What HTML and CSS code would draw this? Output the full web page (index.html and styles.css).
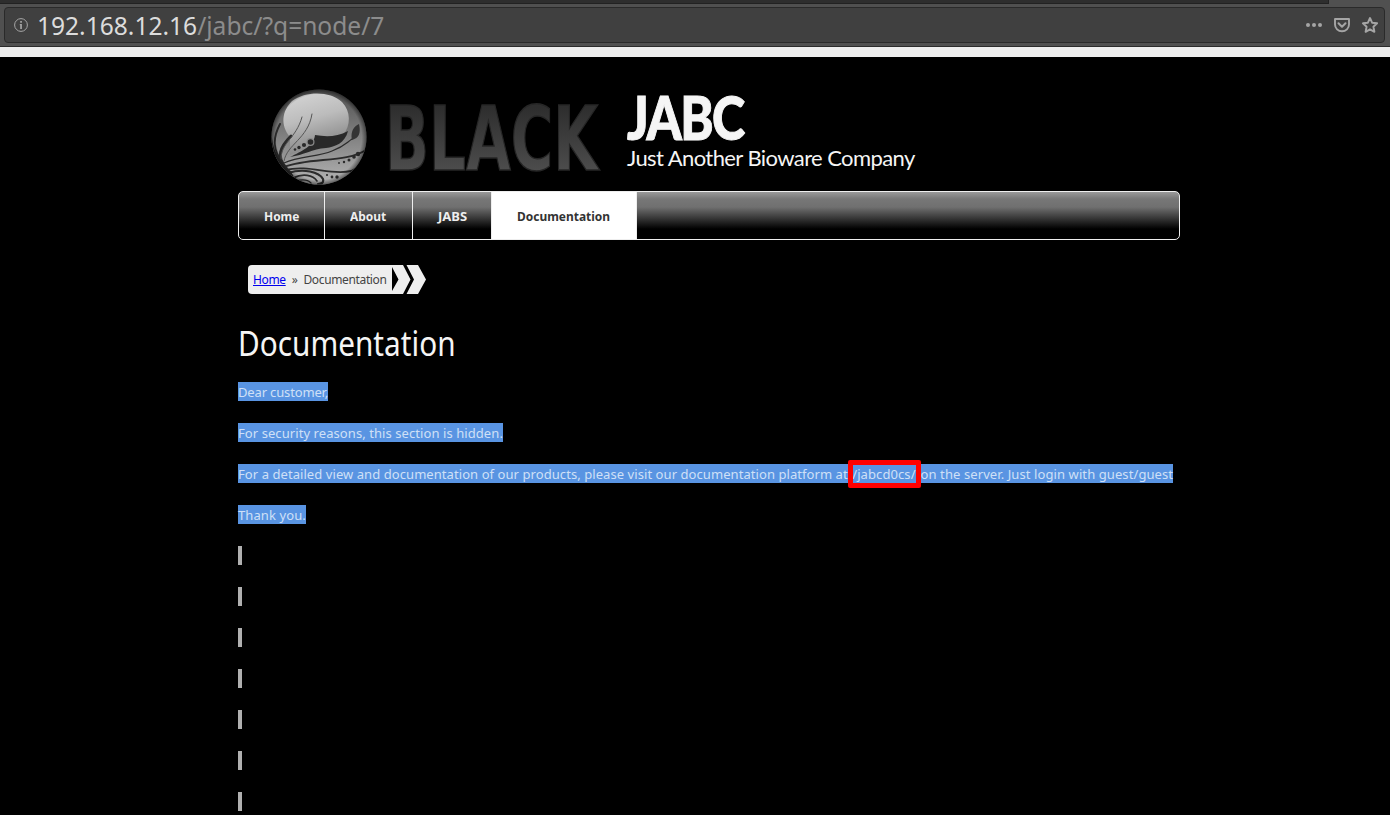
FILE: index.html
```html
<!DOCTYPE html>
<html lang="en">
<head>
<meta charset="utf-8">
<title>Documentation | JABC</title>
<link rel="stylesheet" href="styles.css">
</head>
<body>
<div class="toolbar">
  <div class="tabstrip"></div>
  <div class="urlbar">
    <svg class="info" viewBox="0 0 14 14" width="14" height="14"><circle cx="7" cy="7" r="6.400" fill="none" stroke="#a5a5a5"/><path d="M6.200 3h1.700v1.700H6.200zM5.800 6h2.100v5H6.200V7.200h-.4z" fill="#a5a5a5"/></svg>
    <div class="url"><span class="host">192.168.12.16</span><span class="path">/jabc/?q=node/7</span></div>
    <svg class="actions" viewBox="0 0 76 20" width="76" height="20">
      <g fill="#a5a5a5"><circle cx="4" cy="10" r="2"/><circle cx="10" cy="10" r="2"/><circle cx="16" cy="10" r="2"/></g>
      <path d="M31 4h14v5.500a7 6.800 0 0 1-14 0z" fill="none" stroke="#a5a5a5" stroke-width="1.900" stroke-linejoin="round"/>
      <path d="M34.500 8.300l3.500 3.500 3.500-3.500" fill="none" stroke="#a5a5a5" stroke-width="2" stroke-linecap="round" stroke-linejoin="round"/>
      <path d="M66 3l2.100 4.700 5 .6-3.700 3.400 1 5.100-4.400-2.500-4.400 2.500 1-5.100-3.700-3.400 5-.6z" fill="none" stroke="#a5a5a5" stroke-width="1.900" stroke-linejoin="round"/>
    </svg>
  </div>
</div>
<div class="page">
  <header class="header">
    <svg class="logo" viewBox="0 0 350 102" width="350" height="102">
      <defs>
        <linearGradient id="ball" x1="0" y1="0" x2="0" y2="1"><stop offset="0" stop-color="#505050"/><stop offset=".45" stop-color="#7c7c7c"/><stop offset="1" stop-color="#b4b4b4"/></linearGradient>
        <linearGradient id="gloss" x1=".3" y1="0" x2=".6" y2="1"><stop offset="0" stop-color="#d2d2d2"/><stop offset=".4" stop-color="#bcbcbc"/><stop offset="1" stop-color="#7c7c7c"/></linearGradient>
        <radialGradient id="rim"><stop offset=".9" stop-opacity="0"/><stop offset="1" stop-opacity=".45"/></radialGradient>
        <linearGradient id="word" x1="0" y1="0" x2="0" y2="1"><stop offset=".2" stop-color="#2e2e2e"/><stop offset=".8" stop-color="#4c4c4c"/></linearGradient>
        <clipPath id="disc"><circle cx="51" cy="50" r="47.500"/></clipPath>
      </defs>
      <circle cx="51" cy="50" r="47.500" fill="url(#ball)"/>
      <g clip-path="url(#disc)">
        <path d="M22 50C12 38 14 24 24 14 38 4 62 4 74 15c9 9 9 24 1 33-6 6-16 7-23 7-9 4-20 9-30 13z" fill="url(#gloss)"/>
        <path d="M47 48c11 2 22 2 33-4-3 12-13 16-22 17-14 1-22 7-36 9 12-6 24-11 25-22z" fill="#292929"/>
        <g fill="none" stroke="#2b2b2b" stroke-linecap="round">
          <path d="M2 61C6 73 15 80 23 89" stroke-width="4.500"/>
          <path d="M3 51c2 18 11 26 20 35" stroke-width="2"/>
          <path d="M23 49C12 60 8 70 18 81" stroke-width="3"/>
          <path d="M12 37C4 52 5 64 15 76" stroke-width="2"/>
          <path d="M34 30c-6 22-21 25-21 42" stroke-width="1" stroke="#555"/>
          <path d="M44 27C40 52 19 57 16 74" stroke-width="1" stroke="#555"/>
          <path d="M16 76c16-7 34-6 48-12 13-5 14-8 20-12" stroke-width="1.200"/>
          <path d="M16 80c26-10 62-4 82-17" stroke-width="1.900"/>
          <path d="M17 83c25-6 45 6 66 1 6-2 8-5 12-8" stroke-width="1.800"/>
          <path d="M20 86c16-5 31-1 35 6 1 4-2 5-5 5" stroke-width="2.200"/>
          <path d="M25 91c10-5 20-3 24 3" stroke-width="1.600"/>
          <path d="M28 94c7-2 12-1 15 2" stroke-width="1.300"/>
        </g>
        <path d="M84 53c-2-8 2-14 7-16 2 9 0 14-7 16z" fill="#343434"/>
        <circle cx="42.500" cy="55" r="4" fill="#8a8a8a"/>
        <g fill="#292929"><circle cx="42.500" cy="55" r="2.800"/><circle cx="36" cy="58" r="2.100"/><circle cx="31" cy="60.500" r="1.700"/><circle cx="27" cy="62.500" r="1.300"/><circle cx="90" cy="67" r="2.200"/><circle cx="86" cy="70" r="1.800"/><circle cx="81" cy="73" r="1.500"/><circle cx="76" cy="75" r="1.200"/><circle cx="71" cy="76" r=".9"/><circle cx="69" cy="90" r="1.700"/><circle cx="64" cy="90" r="1.400"/><circle cx="59" cy="88" r="1.100"/></g>
      </g>
      <circle cx="51" cy="50" r="47.500" fill="url(#rim)"/>
      <text class="wordmark" x="117" y="82.500" textLength="213" lengthAdjust="spacingAndGlyphs">BLACK</text>
    </svg>
    <div class="titles">
      <div class="name">JABC</div>
      <div class="slogan">Just Another Bioware Company</div>
    </div>
  </header>
  <nav class="nav">
    <a class="tab tab-home"><span>Home</span></a><a class="tab tab-about"><span>About</span></a><a class="tab tab-jabs"><span>JABS</span></a><a class="tab tab-docs active"><span>Documentation</span></a>
  </nav>
  <div class="crumbs">
    <div class="trail"><a href="#">Home</a><span class="sep">»</span><span class="here">Documentation</span></div>
    <svg viewBox="0 0 34 29" width="34" height="29"><path d="M0 0h11l7.500 14.500L11 29H0v-3l6.500-11.500L0 2zM14.500 0H26l8 14.500L26 29H14.500l7.500-14.500z" fill="#eee"/></svg>
  </div>
  <h1 class="title">Documentation</h1>
  <div class="body">
    <p><span class="sel greeting">Dear customer,</span></p>
    <p><span class="sel reason">For security reasons, this section is hidden.</span></p>
    <p><span class="sel"><span class="lead">For a detailed view and documentation of our products, please visit our documentation platform at </span><span class="mark">/jabcd0cs/</span> on the server. Just login with guest/guest</span></p>
    <p><span class="sel">Thank you.</span></p>
    <p><i></i></p><p><i></i></p><p><i></i></p><p><i></i></p><p><i></i></p><p><i></i></p><p><i></i></p>
  </div>
</div>
</body>
</html>
```
FILE: styles.css
```css
*, *::after { box-sizing: border-box; }
body { margin: 0; background: #000; font-family: "Noto Sans", sans-serif; height: 815px; overflow: hidden; }
svg { display: block; }
.toolbar { height: 57px; background: #505050; border-bottom: 10px solid #ededed; padding: 0 4px; box-shadow: inset 0 -1px #2b2b2b; }
.tabstrip { height: 4px; margin-left: -4px; width: 1329px; background: #2e2e2e; border-bottom: 1px solid #222; border-right: 1px solid #222; }
.urlbar { height: 36px; margin-top: 3px; width: 1381px; background: #404040; border: 1px solid #2a2a2a; border-radius: 4px; display: flex; align-items: center; padding: 0 4px 0 9px; }
.url { flex: 1; margin-left: 9px; padding-top: 2px; font-size: 24.55px; line-height: 32px; color: #8c8c8c; white-space: nowrap; }
.host { color: #dcdcdc; }
.page { width: 942px; margin-left: 238px; }
.header { height: 134px; padding: 30px 0 0 30px; display: flex; }
.logo { overflow: visible; }
.wordmark { font: bold 89px "DejaVu Sans Condensed", "DejaVu Sans", sans-serif; fill: url(#word); stroke: #262626; stroke-width: 1.5px; }
.titles { margin-left: 9px; color: #f5f5f5; white-space: nowrap; font-family: Lato, sans-serif; }
.name { font-size: 60px; font-weight: 900; line-height: 60px; height: 60px; letter-spacing: -2px; -webkit-text-stroke: 1px #f5f5f5; transform: scaleX(.84); transform-origin: 0 0; }
.slogan { margin-top: -1px; font-size: 22px; line-height: 24px; letter-spacing: -.58px; }
.nav { height: 49px; border: 1px solid #eee; border-radius: 5px; display: flex; overflow: hidden; background: linear-gradient(#999 0, #777 7px, #707070 15px, #000 37px); }
.tab { border-right: 1px solid #eee; color: #eee; font-size: 13px; font-weight: bold; line-height: 48px; padding-left: 25px; }
.tab span { display: inline-block; transform: scaleX(.92); transform-origin: 0 50%; }
.tab-home { width: 86px; }
.tab-about { width: 88px; }
.tab-jabs { width: 79px; }
.tab-jabs span { transform: none; }
.tab-docs { width: 145px; }
.active { background: #fff; color: #333; }
.crumbs { display: flex; margin: 25px 0 0 10px; height: 29px; }
.trail { width: 144px; background: #eee; border-radius: 4px 0 0 4px; padding-left: 5px; font-size: 12px; line-height: 29px; color: #444; white-space: nowrap; letter-spacing: -.36px; }
.trail a { color: #00e; }
.sep { margin: 0 6px; }
.title { margin: 24px 0 0; height: 50px; line-height: 50px; font-size: 35px; font-weight: normal; color: #f5f5f5; transform: scaleX(.85); transform-origin: 0 0; }
.body { margin-top: 14px; font-size: 13px; color: #cfe0f7; letter-spacing: .093px; }
.body p { margin: 0 0 22px; height: 19px; line-height: 21px; white-space: nowrap; }
.sel { display: inline-block; height: 19px; background: #5994e2; }
.greeting { letter-spacing: -.15px; }
.reason { letter-spacing: .075px; }
.lead { letter-spacing: .068px; }
.mark { position: relative; margin: 0 1.500px 0 1px; }
.mark::after { content: ""; position: absolute; left: -4px; top: -5px; width: 73px; height: 28px; border: 5px solid #f00; border-radius: 2px; }
.body i { display: block; width: 4px; height: 19px; background: #b0b0b0; }
```
